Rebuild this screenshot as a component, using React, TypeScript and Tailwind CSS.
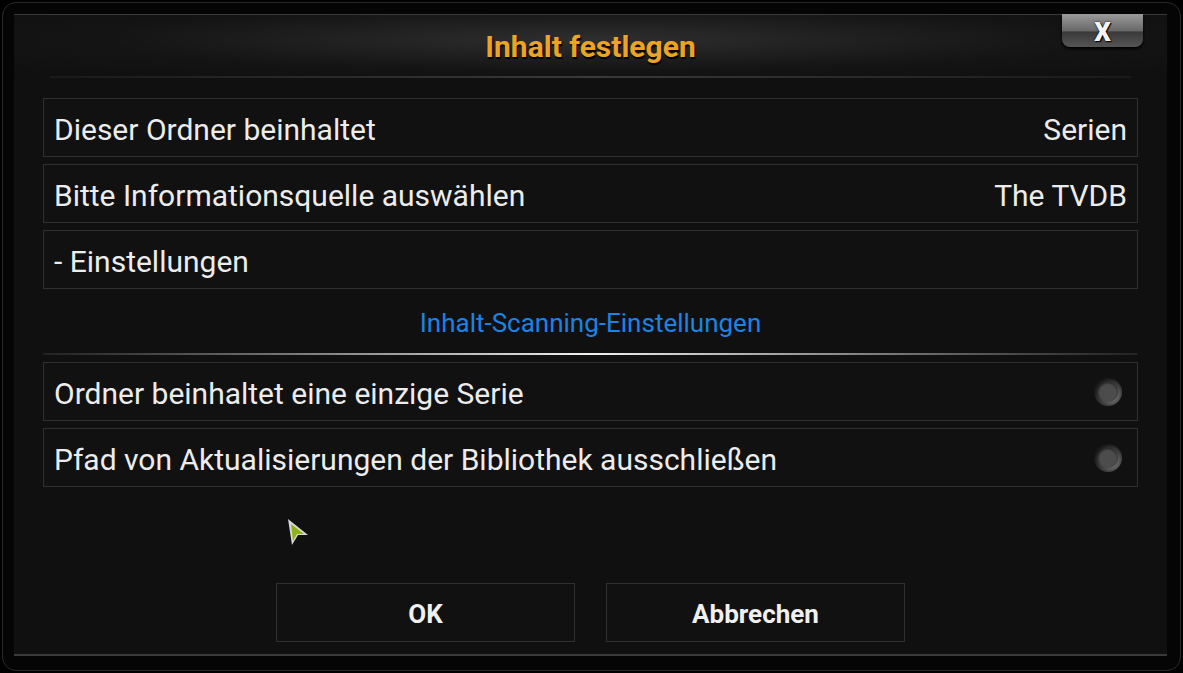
import React from "react";

const rows = [
  { label: "Dieser Ordner beinhaltet", value: "Serien" },
  { label: "Bitte Informationsquelle auswählen", value: "The TVDB" },
  { label: "- Einstellungen", value: "" },
];

const toggles = [
  "Ordner beinhaltet eine einzige Serie",
  "Pfad von Aktualisierungen der Bibliothek ausschließen",
];

function Radio() {
  return (
    <div className="flex h-[28px] w-[28px] items-center justify-center rounded-full bg-[radial-gradient(circle_at_62%_62%,#8a8a8a,#404040_45%,#161616_72%)]">
      <div className="h-[20px] w-[20px] rounded-full bg-[#4c4c4c] shadow-[inset_0_1px_2px_rgba(0,0,0,0.6)]" />
    </div>
  );
}

function Cursor() {
  return (
    <svg width="26" height="30" viewBox="0 0 26 30" className="absolute left-[285px] top-[516px]">
      <path d="M3 3 L23 19 L13 19 L7 29 Z" fill="#d8d8d8" />
      <path d="M6 8 L19 18 L12 18 L8 25 Z" fill="#8fb21c" />
    </svg>
  );
}

export default function App() {
  return (
    <div
      className="relative h-[673px] w-[1183px] overflow-hidden bg-black p-[2px]"
      style={{ fontFamily: "Roboto, 'Noto Sans', sans-serif" }}
    >
      <div className="h-full w-full rounded-[14px] border border-[#2a2a2a] bg-[#050505] pt-[11px] pr-[13px] pb-[14px] pl-[11px]">
        <div className="flex h-full flex-col bg-[#101010]">
          {/* header */}
          <div className="flex h-[62px] items-center justify-center border-t border-[#3a3a3a] bg-[radial-gradient(ellipse_at_50%_40%,#2e2e2e,#141414_60%,#0f0f0f)]">
            <h1 className="pt-[2px] text-[30px] font-bold text-[#eba423] [text-shadow:1px_2px_1px_#000]">
              Inhalt festlegen
            </h1>
          </div>
          <div className="mx-[36px] h-[2px] bg-gradient-to-r from-[#1a1a1a] via-[#3a3a3a] to-[#1a1a1a]" />

          <div className="flex flex-col px-[29px] pt-[20px]">
            <div className="flex flex-col gap-[7px]">
              {rows.map((r) => (
                <div
                  key={r.label}
                  className="flex h-[59px] items-center justify-between border border-[#303030] bg-[#111111] px-[10px] pt-[3px] text-[30px] text-[#ececec]"
                >
                  <span>{r.label}</span>
                  <span>{r.value}</span>
                </div>
              ))}
            </div>

            <div className="flex h-[64px] items-center justify-center pt-[4px] text-[26px] text-[#1a84e6]">
              Inhalt-Scanning-Einstellungen
            </div>
            <div className="h-[2px] bg-gradient-to-r from-[#222] via-[#f2f2f2] to-[#222]" />

            <div className="mt-[7px] flex flex-col gap-[7px]">
              {toggles.map((t) => (
                <div
                  key={t}
                  className="flex h-[59px] items-center justify-between border border-[#303030] bg-[#111111] pr-[15px] pl-[10px] text-[30px] text-[#ececec]"
                >
                  <span className="pt-[3px]">{t}</span>
                  <Radio />
                </div>
              ))}
            </div>

            <div className="mt-[96px] flex justify-center gap-[31px]">
              <button className="flex h-[59px] w-[299px] items-center justify-center border border-[#303030] bg-[#111111] pt-[3px] text-[26px] font-bold text-[#f0f0f0]">
                OK
              </button>
              <button className="flex h-[59px] w-[299px] items-center justify-center border border-[#303030] bg-[#111111] pt-[3px] text-[26px] font-bold text-[#f0f0f0]">
                Abbrechen
              </button>
            </div>
          </div>
          <div className="mt-auto h-[2px] bg-[#3a3a3a]" />
        </div>
      </div>

      {/* close button */}
      <button className="absolute left-[1062px] top-[14px] flex h-[33px] w-[81px] items-center justify-center rounded-b-[8px] bg-[linear-gradient(#9a9a9a,#6a6a6a_50%,#3a3a3a_55%,#555)] shadow-[0_2px_3px_#000]">
        <span className="pt-[3px] text-[26px] font-black leading-none text-[#f4f4f4] [text-shadow:0_0_2px_#000,1px_1px_1px_#000]">
          X
        </span>
      </button>

      <Cursor />
    </div>
  );
}
